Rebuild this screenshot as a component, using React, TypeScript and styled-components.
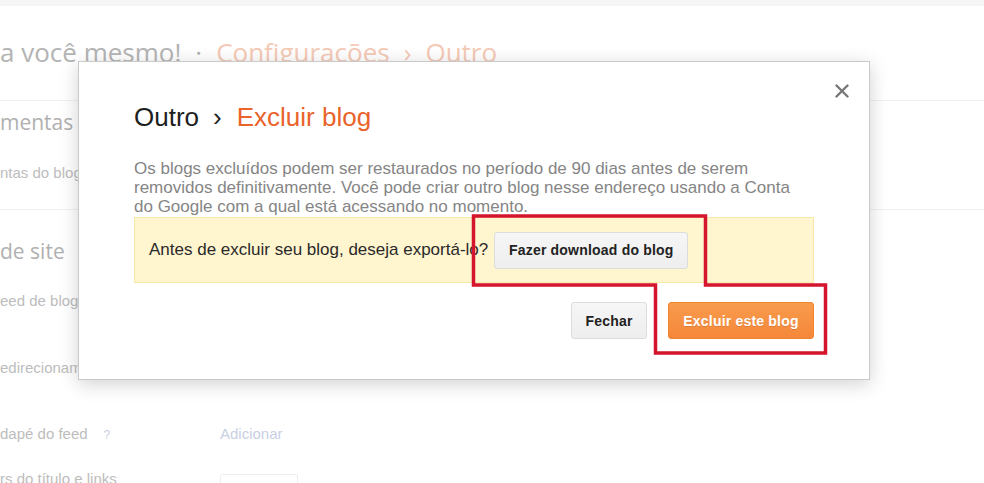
import React from 'react'
import styled, { createGlobalStyle } from 'styled-components'

const GlobalStyle = createGlobalStyle`
  html, body {
    margin: 0;
    padding: 0;
    background: #fff;
  }
  * {
    box-sizing: border-box;
  }
`

const Page = styled.div`
  position: relative;
  width: 984px;
  height: 483px;
  overflow: hidden;
  background: #fff;
  font-family: 'Liberation Sans', Arial, sans-serif;
`

const TopStrip = styled.div`
  height: 6px;
  background: #f5f5f5;
`

const Header = styled.div`
  height: 95px;
  padding-top: 31px;
  border-bottom: 1px solid #f0f0f0;
  font-family: 'Open Sans', sans-serif;
  font-size: 26px;
  line-height: 30px;
  color: #b4b4b4;
  white-space: nowrap;
`

const Crumb = styled.span<{ $accent?: boolean }>`
  color: ${(p) => (p.$accent ? '#f5cab6' : '#b4b4b4')};
  margin-right: 14px;
`

const Section = styled.div<{ $line?: boolean }>`
  padding-top: 8px;
  border-bottom: ${(p) => (p.$line ? '1px solid #f2f2f2' : 'none')};
`

const SectionTitle = styled.div<{ $gap?: number }>`
  margin-top: ${(p) => p.$gap ?? 0}px;
  font-family: 'Open Sans', sans-serif;
  font-size: 21px;
  line-height: 26px;
  color: #b0b0b0;
  white-space: nowrap;
`

const Row = styled.div<{ $h: number }>`
  display: grid;
  grid-template-columns: 220px 1fr;
  align-items: center;
  height: ${(p) => p.$h}px;
  font-size: 15px;
  color: #bdbdbd;
  white-space: nowrap;
`

const Help = styled.span`
  margin-left: 16px;
  font-size: 12px;
  color: #c8d0e0;
`

const LinkText = styled.span`
  color: #c8d0e3;
`

const ColorBox = styled.div`
  width: 78px;
  height: 26px;
  border: 1px solid #eee;
  border-radius: 2px;
  align-self: end;
  margin-bottom: -12px;
`

const Modal = styled.div`
  position: absolute;
  left: 78px;
  top: 61px;
  width: 792px;
  height: 319px;
  background: #fff;
  border: 1px solid #c9c9c9;
  box-shadow: 0 4px 18px rgba(0, 0, 0, 0.18);
  padding: 40px 55px 0 55px;
`

const Close = styled.button`
  position: absolute;
  top: 20px;
  right: 18px;
  width: 18px;
  height: 18px;
  padding: 0;
  border: none;
  background: none;
  display: flex;
  align-items: center;
  justify-content: center;
`

const Title = styled.h2`
  margin: 0;
  font-size: 26px;
  line-height: 30px;
  font-weight: normal;
  color: #1e1e1e;
`

const TitleSep = styled.span`
  margin: 0 15px 0 14px;
`

const TitleAccent = styled.span`
  color: #e9632b;
`

const Text = styled.p`
  max-width: 665px;
  margin: 27px 0 1px;
  font-size: 17px;
  line-height: 19px;
  color: #858585;
`

const Notice = styled.div`
  display: flex;
  align-items: center;
  height: 66px;
  padding: 0 14px;
  background: #fff5cf;
  border: 1px solid #f7e7a8;
  font-size: 17px;
  color: #2a2a2a;
`

const Button = styled.button<{ $primary?: boolean; $w: number }>`
  width: ${(p) => p.$w}px;
  height: 37px;
  padding: 0;
  border-radius: 3px;
  border: 1px solid ${(p) => (p.$primary ? '#f0842f' : '#dcdcdc')};
  background: ${(p) =>
    p.$primary
      ? 'linear-gradient(#f89b4d, #f5873a)'
      : 'linear-gradient(#f6f6f6, #eeeeee)'};
  color: ${(p) => (p.$primary ? '#fff' : '#222')};
  font-family: 'Liberation Sans', Arial, sans-serif;
  font-size: 14px;
  letter-spacing: 0.2px;
  font-weight: bold;
  text-shadow: ${(p) => (p.$primary ? '0 1px 0 rgba(0,0,0,0.12)' : 'none')};
`

const NoticeButton = styled(Button)`
  margin-left: 6px;
`

const Footer = styled.div`
  display: flex;
  justify-content: flex-end;
  gap: 21px;
  margin-top: 19px;
`

const Highlight = styled.svg`
  position: absolute;
  left: 0;
  top: 0;
  pointer-events: none;
`

const App: React.FC = () => {
  return (
    <>
      <GlobalStyle />
      <Page>
        <TopStrip />
        <Header>
          <Crumb>a você mesmo!</Crumb>
          <Crumb>·</Crumb>
          <Crumb $accent>Configurações</Crumb>
          <Crumb $accent>›</Crumb>
          <Crumb $accent>Outro</Crumb>
        </Header>
        <Section $line>
          <SectionTitle>mentas</SectionTitle>
          <Row $h={74}>
            <span>ntas do blog</span>
            <span />
          </Row>
        </Section>
        <Section>
          <SectionTitle $gap={20}>de site</SectionTitle>
          <Row $h={72}>
            <span>eed de blog</span>
            <span />
          </Row>
          <Row $h={62}>
            <span>edirecionamento</span>
            <span />
          </Row>
          <Row $h={70}>
            <span>
              dapé do feed<Help>?</Help>
            </span>
            <LinkText>Adicionar</LinkText>
          </Row>
          <Row $h={20}>
            <span>rs do título e links</span>
            <ColorBox />
          </Row>
        </Section>

        <Modal>
          <Close aria-label="Fechar">
            <svg width="14" height="14" viewBox="0 0 14 14">
              <path d="M1.5 1.5 L12.5 12.5 M12.5 1.5 L1.5 12.5" stroke="#777" strokeWidth="2.4" strokeLinecap="round" />
            </svg>
          </Close>
          <Title>
            Outro<TitleSep>›</TitleSep>
            <TitleAccent>Excluir blog</TitleAccent>
          </Title>
          <Text>
            Os blogs excluídos podem ser restaurados no período de 90 dias antes de serem
            removidos definitivamente. Você pode criar outro blog nesse endereço usando a Conta
            do Google com a qual está acessando no momento.
          </Text>
          <Notice>
            Antes de excluir seu blog, deseja exportá-lo?
            <NoticeButton $w={194}>Fazer download do blog</NoticeButton>
          </Notice>
          <Footer>
            <Button $w={76}>Fechar</Button>
            <Button $w={146} $primary>
              Excluir este blog
            </Button>
          </Footer>
        </Modal>

        <Highlight width="984" height="483">
          <polygon
            points="473.5,216 705.5,216 705.5,285 825.5,285 825.5,353 655.5,353 655.5,285 473.5,285"
            fill="none"
            stroke="#d4152d"
            strokeWidth="3.5"
          />
        </Highlight>
      </Page>
    </>
  )
}

export default App
